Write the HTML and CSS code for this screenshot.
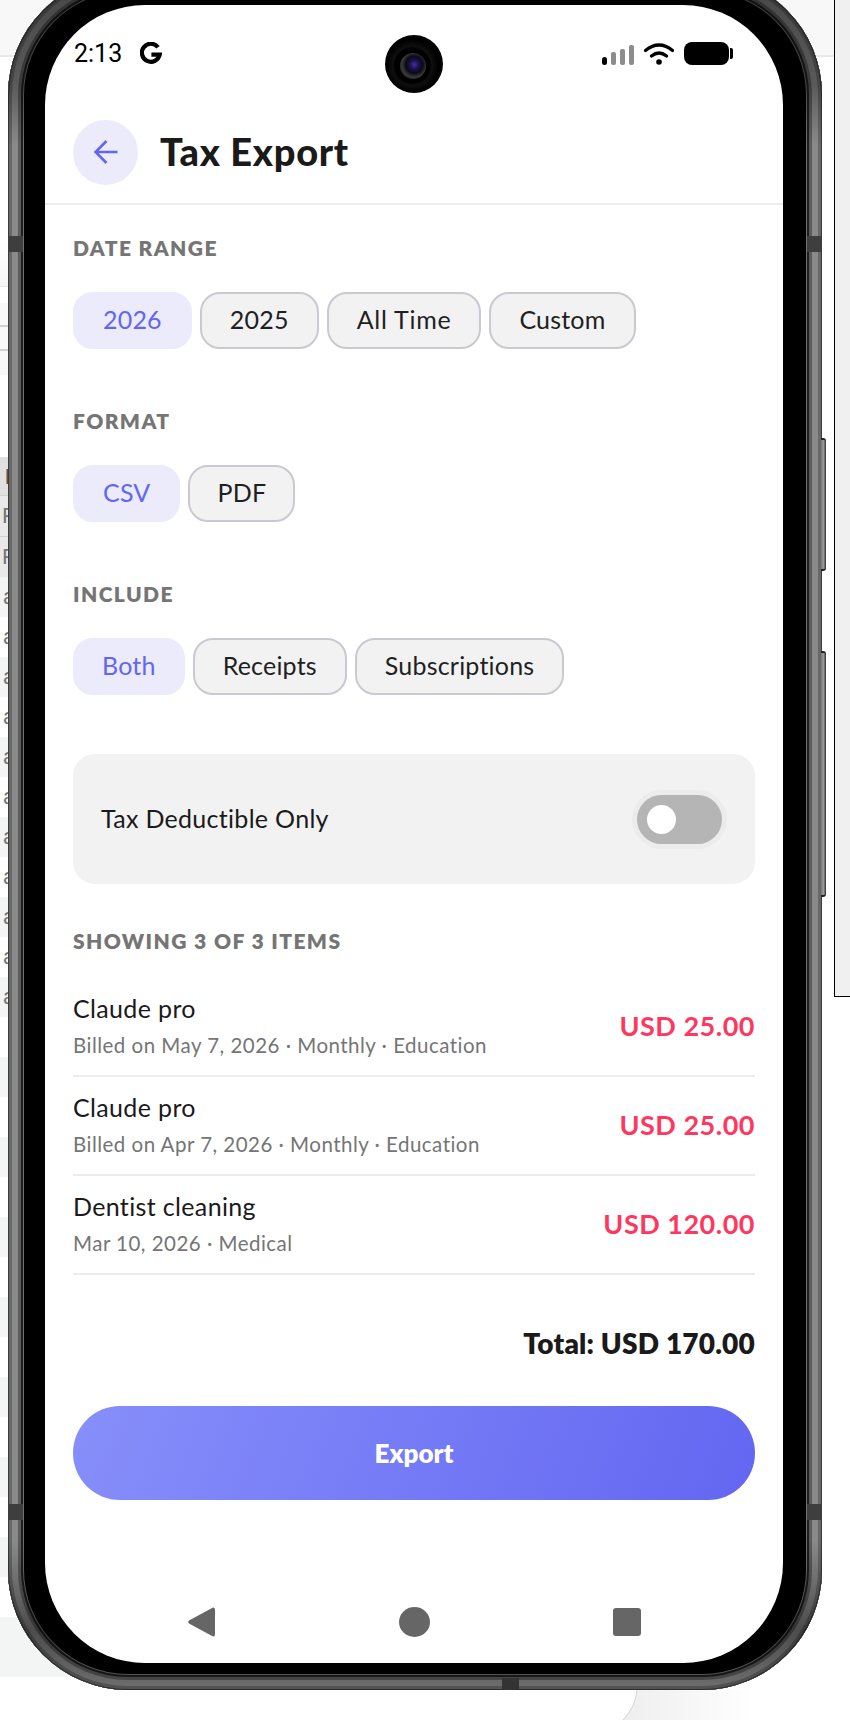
FILE: index.html
```html
<!DOCTYPE html>
<html lang="en">
<head>
<meta charset="utf-8">
<title>Tax Export</title>
<link rel="stylesheet" href="styles.css">
</head>
<body>
<!-- Admin page that sits behind the device preview -->
<div class="page">
  <div class="page-top"></div>
  <div class="page-fade"></div>
  <div class="page-filter"><div class="filter-cell"></div><div class="filter-cell"></div><div class="filter-cell"></div></div>
  <div class="page-table">
    <div class="tr th">I</div>
    <div class="tr tp">P</div>
    <div class="tr tp">P</div>
    <div class="tr odd">a</div><div class="tr">a</div>
    <div class="tr odd">a</div><div class="tr">a</div>
    <div class="tr odd">a</div><div class="tr">a</div>
    <div class="tr odd">a</div><div class="tr">a</div>
    <div class="tr odd">a</div><div class="tr">a</div>
    <div class="tr odd">a</div><div class="tr"></div>
    <div class="tr odd"></div><div class="tr"></div>
    <div class="tr odd"></div><div class="tr"></div>
    <div class="tr odd"></div><div class="tr"></div>
    <div class="tr odd"></div><div class="tr"></div>
    <div class="tr odd"></div><div class="tr"></div>
    <div class="tr odd"></div><div class="tr"></div>
    <div class="tr odd"></div><div class="tr"></div>
  </div>
  <div class="page-card"></div>
</div>
<div class="side-panel"></div>
<svg class="corner-curve" width="130" height="30" viewBox="0 0 130 30">
  <defs>
    <linearGradient id="cornerFade" x1="0" y1="0" x2="1" y2="0">
      <stop offset="0" stop-color="#eeeeee"/>
      <stop offset="1" stop-color="#ffffff"/>
    </linearGradient>
  </defs>
  <path d="M14 0Q13 16 0 30H130V0Z" fill="url(#cornerFade)"/>
  <path d="M14 0Q13 16 0 30" fill="none" stroke="#d4d4d4"/>
</svg>

<!-- Device preview -->
<div class="phone">
  <span class="band band-lt"></span>
  <span class="band band-rt"></span>
  <span class="band band-lb"></span>
  <span class="band band-rb"></span>
  <span class="band-bottom"></span>
  <span class="key key-power"></span>
  <span class="key key-volume"></span>
  <div class="screen">
    <div class="camera"><span class="lens"></span></div>
    <div class="status">
      <div class="status-left">
        <span class="time">2:13</span>
        <svg class="g-logo" width="22" height="23" viewBox="0 0 22 23">
          <path d="M18 5.2A9 9 0 1 0 19.7 12.6H11.4" fill="none" stroke="#000" stroke-width="4.2"/>
        </svg>
      </div>
      <div class="status-right">
        <svg width="32" height="20" viewBox="0 0 32 20">
          <rect x="0" y="12" width="5" height="8" rx="2.5" fill="#000"/>
          <rect x="9" y="7" width="5" height="13" rx="2" fill="#8c8c8c"/>
          <rect x="18" y="4" width="5" height="16" rx="2" fill="#8c8c8c"/>
          <rect x="27" y="0" width="5" height="20" rx="2" fill="#8c8c8c"/>
        </svg>
        <svg width="30" height="22" viewBox="0 0 30 22">
          <path d="M1.5 7.5Q15 -3.500 28.500 7.500M7.500 13Q15 7 22.500 13" fill="none" stroke="#000" stroke-width="3.200" stroke-linecap="round"/>
          <circle cx="15" cy="19" r="2.800" fill="#000"/>
        </svg>
        <div class="battery"><span class="battery-body"></span><span class="battery-nub"></span></div>
      </div>
    </div>

    <header class="app-header">
      <button class="back">
        <svg class="back-icon" width="24" height="24" viewBox="0 0 24 24">
          <path d="M23.500 12H1.500M12.500 1 1.500 12l11 11" fill="none" stroke="#6366f1" stroke-width="2.600"/>
        </svg>
      </button>
      <h1 class="title">Tax Export</h1>
    </header>

    <main class="content">
      <h2 class="label">DATE RANGE</h2>
      <div class="chips">
        <span class="chip on">2026</span>
        <span class="chip">2025</span>
        <span class="chip chip-loose">All Time</span>
        <span class="chip">Custom</span>
      </div>

      <h2 class="label label-next">FORMAT</h2>
      <div class="chips">
        <span class="chip on">CSV</span>
        <span class="chip chip-snug">PDF</span>
      </div>

      <h2 class="label label-next">INCLUDE</h2>
      <div class="chips">
        <span class="chip chip-snug on">Both</span>
        <span class="chip">Receipts</span>
        <span class="chip">Subscriptions</span>
      </div>

      <div class="toggle-card">
        <span class="toggle-text">Tax Deductible Only</span>
        <span class="toggle"><span class="knob"></span></span>
      </div>

      <h2 class="label label-count">SHOWING 3 OF 3 ITEMS</h2>
      <ul class="items">
        <li class="item">
          <div><div class="item-name">Claude pro</div><div class="item-meta">Billed on May 7, 2026 · Monthly · Education</div></div>
          <div class="amount">USD 25.00</div>
        </li>
        <li class="item">
          <div><div class="item-name">Claude pro</div><div class="item-meta">Billed on Apr 7, 2026 · Monthly · Education</div></div>
          <div class="amount">USD 25.00</div>
        </li>
        <li class="item">
          <div><div class="item-name">Dentist cleaning</div><div class="item-meta">Mar 10, 2026 · Medical</div></div>
          <div class="amount">USD 120.00</div>
        </li>
      </ul>

      <div class="total">Total: USD 170.00</div>
      <button class="export">Export</button>
    </main>

    <nav class="nav">
      <svg width="27" height="30" viewBox="0 0 27 30"><path d="M25 0.500Q27 0 27 3V27Q27 30 25 29.500L1 16.500Q-0.500 15 1 13.500Z" fill="#666"/></svg>
      <span class="nav-home"></span>
      <span class="nav-recent"></span>
    </nav>
  </div>
</div>
</body>
</html>
```
FILE: styles.css
```css
* { box-sizing: border-box; }

html, body {
  margin: 0;
  height: 1720px;
  background: #fff;
  overflow: hidden;
}

/* Page behind the device */
.page { width: 834px; height: 1720px; }
.page-top { height: 57px; background: #f8f8f8; border-bottom: 2px solid #e8e8e8; }
.page-fade {
  width: 618px;
  height: 230px;
  background: linear-gradient(to bottom, #fff 0, #fff 80%, #f6f6f6 100%);
  border-bottom: 1px solid #e6e6e6;
}
.page-filter { margin-top: 16px; width: 618px; }
.filter-cell { height: 24px; background: #f8f8f8; border-bottom: 2px solid #d0d0d0; }
.filter-cell:last-child { border-bottom: 0; }
.page-table { margin-top: 82px; width: 618px; }
.tr {
  height: 40px;
  padding-left: 3px;
  font: 22px/40px "Liberation Sans", sans-serif;
  color: #777;
}
.tr.th { height: 38px; background: #e0e0e0; color: #555; font-weight: 700; padding-left: 5px; }
.tr.tp { height: 41px; background: #e9e9e9; border-top: 1px solid #d2d2d2; padding-left: 2px; }
.tr.odd { background: #f3f5f5; }
.page-card { height: 60px; width: 618px; background: #f3f5f5; border-top-right-radius: 16px; }

.side-panel {
  position: absolute;
  top: 0;
  left: 834px;
  width: 16px;
  height: 997px;
  background: #f0f0f0;
  border-left: 1px solid #000;
  border-bottom: 1px solid #000;
}
.corner-curve { position: absolute; left: 623px; top: 1690px; }

/* Device shell */
.phone {
  position: absolute;
  left: 8px;
  top: -25px;
  width: 814px;
  height: 1715px;
  padding: 30px 39px 27px 37px;
  border-radius: 120px;
  background: #000;
  box-shadow:
    inset 0 0 0 1px #3a3a3a,
    inset 0 0 0 4px #686868,
    inset 0 0 0 10px #8a8a8a,
    inset 0 0 0 13px #5c5c5c,
    inset 0 0 0 15px #1e1e1e,
    inset 0 0 0 16px #707070;
}
/* Darkens the metal rim towards the rounded corners */
.phone::before {
  content: "";
  position: absolute;
  inset: 0;
  border-radius: inherit;
  background: linear-gradient(to bottom,
    rgba(0, 0, 0, 0.5) 0,
    rgba(0, 0, 0, 0.35) 110px,
    rgba(0, 0, 0, 0) 170px,
    rgba(0, 0, 0, 0) calc(100% - 150px),
    rgba(0, 0, 0, 0.45) calc(100% - 60px),
    rgba(0, 0, 0, 0.2) 100%);
}
.band { position: absolute; width: 15px; height: 16px; background: #3e3e3e; }
.band-lt { left: 0; top: 261px; }
.band-rt { right: 0; top: 261px; }
.band-lb { left: 0; top: 1529px; }
.band-rb { right: 0; top: 1529px; }
.band-bottom { position: absolute; left: 494px; bottom: 0; width: 17px; height: 12px; background: #333; }
.key {
  position: absolute;
  left: 813px;
  width: 5px;
  background: linear-gradient(to right, #777, #999 50%, #333);
  border-radius: 0 3px 3px 0;
  border-top: 2px solid #222;
  border-bottom: 2px solid #222;
}
.key-power { top: 463px; height: 133px; }
.key-volume { top: 676px; height: 246px; }

.screen {
  position: relative;
  display: flex;
  flex-direction: column;
  height: 100%;
  background: #fff;
  border-radius: 100px;
  overflow: hidden;
  font-family: Lato, "Noto Sans", sans-serif;
  color: #1a1a1a;
}

/* Status bar */
.camera {
  position: absolute;
  left: 340px;
  top: 30px;
  width: 58px;
  height: 58px;
  border-radius: 50%;
  background: radial-gradient(circle at 47% 53%, #000 0 40%, #0f0f0f 45%, #000 60%, #0b0b0b 80%, #000 100%);
  display: flex;
  align-items: center;
  justify-content: center;
}
.lens {
  width: 26px;
  height: 26px;
  margin: 4px 3px 0 0;
  border-radius: 50%;
  background: radial-gradient(circle at 55% 45%, #4b2aa0 0, #1b1250 22%, #0a0a14 42%, #3a3a3a 62%, #111 85%);
}
.status {
  flex: none;
  height: 115px;
  padding: 37px 50px 0 29px;
  display: flex;
  align-items: flex-start;
  justify-content: space-between;
}
.status-left { display: flex; align-items: center; gap: 18px; height: 23px; }
.time { font: 25px/23px Roboto, sans-serif; color: #000; }
.status-right { display: flex; align-items: flex-end; gap: 10px; height: 23px; }
.battery { display: flex; align-items: center; gap: 1px; height: 23px; }
.battery-body { width: 45px; height: 23px; border-radius: 8px; background: #000; }
.battery-nub { width: 3px; height: 11px; border-radius: 0 2px 2px 0; background: #000; }

/* Header */
.app-header {
  flex: none;
  display: flex;
  align-items: center;
  gap: 22px;
  padding: 0 28px 18px;
  border-bottom: 2px solid #ececec;
}
.back {
  width: 65px;
  height: 65px;
  border: 0;
  padding: 0;
  border-radius: 50%;
  background: #ecebfc;
  display: flex;
  align-items: center;
  justify-content: center;
}
.back-icon { margin-bottom: 2px; }
.title {
  margin: 0 0 4px;
  font-size: 38px;
  line-height: 44px;
  font-weight: 900;
  letter-spacing: 0.7px;
  color: #1a1a1a;
}

/* Form */
.content { padding: 29px 28px 0; }
.label {
  margin: 0 0 30px;
  font-size: 21px;
  line-height: 28px;
  font-weight: 800;
  letter-spacing: 1.4px;
  color: #757575;
}
.label-next { margin-top: 58px; }
.label-count { margin: 43px 0 23px; }
.chips { display: flex; gap: 8px; }
.chip {
  height: 57px;
  padding: 0 28px;
  border: 2px solid #cbc8d2;
  border-radius: 20px;
  background: #f2f2f3;
  font-size: 25px;
  line-height: 51px;
  letter-spacing: 0.2px;
  color: #1f1f1f;
}
.chip.on { background: #ecebfc; border-color: #ecebfc; color: #6366f1; }
.chip-loose { letter-spacing: 0.75px; }
.chip-snug { padding: 0 27px; }

.toggle-card {
  margin-top: 59px;
  height: 130px;
  padding: 0 33px 0 28px;
  display: flex;
  align-items: center;
  justify-content: space-between;
  border-radius: 22px;
  background: #f2f2f2;
}
.toggle-text { margin-bottom: 2px; font-size: 25px; letter-spacing: 0.3px; color: #1a1a1a; }
.toggle {
  width: 85px;
  height: 49px;
  border-radius: 25px;
  background: #b5b5b5;
  box-shadow: 0 0 0 5px #ececec;
  display: flex;
  align-items: center;
  padding-left: 10px;
}
.knob { width: 29px; height: 29px; border-radius: 50%; background: #fff; }

/* Line items */
.items { list-style: none; margin: 0; padding: 0; }
.item {
  height: 99px;
  padding: 13px 0 13px;
  display: flex;
  align-items: center;
  justify-content: space-between;
  border-bottom: 2px solid #ececec;
}
.item-name { font-size: 25px; line-height: 34px; letter-spacing: 0.35px; color: #1a1a1a; }
.item-meta { margin-top: 3px; font-size: 20.500px; line-height: 34px; letter-spacing: 0.48px; color: #757575; }
.amount { margin-bottom: 3px; font-size: 27px; font-weight: 700; letter-spacing: 0.5px; color: #ff375f; }
.total {
  margin-top: 50px;
  text-align: right;
  font-size: 28px;
  line-height: 36px;
  font-weight: 800;
  letter-spacing: 0.2px;
  color: #1a1a1a;
}
.export {
  display: block;
  width: 100%;
  height: 94px;
  margin-top: 45px;
  border: 0;
  border-radius: 47px;
  background: linear-gradient(110deg, #878ffa 0%, #6366f1 100%);
  font-family: inherit;
  font-size: 26px;
  font-weight: 800;
  color: #fff;
}

/* Navigation bar */
.nav {
  margin-top: auto;
  padding-bottom: 26px;
  display: grid;
  grid-template-columns: repeat(3, 213px);
  justify-content: center;
  justify-items: center;
  align-items: center;
}
.nav-home { width: 31px; height: 30px; border-radius: 50%; background: #666; }
.nav-recent { width: 28px; height: 28px; border-radius: 3px; background: #666; }
```
